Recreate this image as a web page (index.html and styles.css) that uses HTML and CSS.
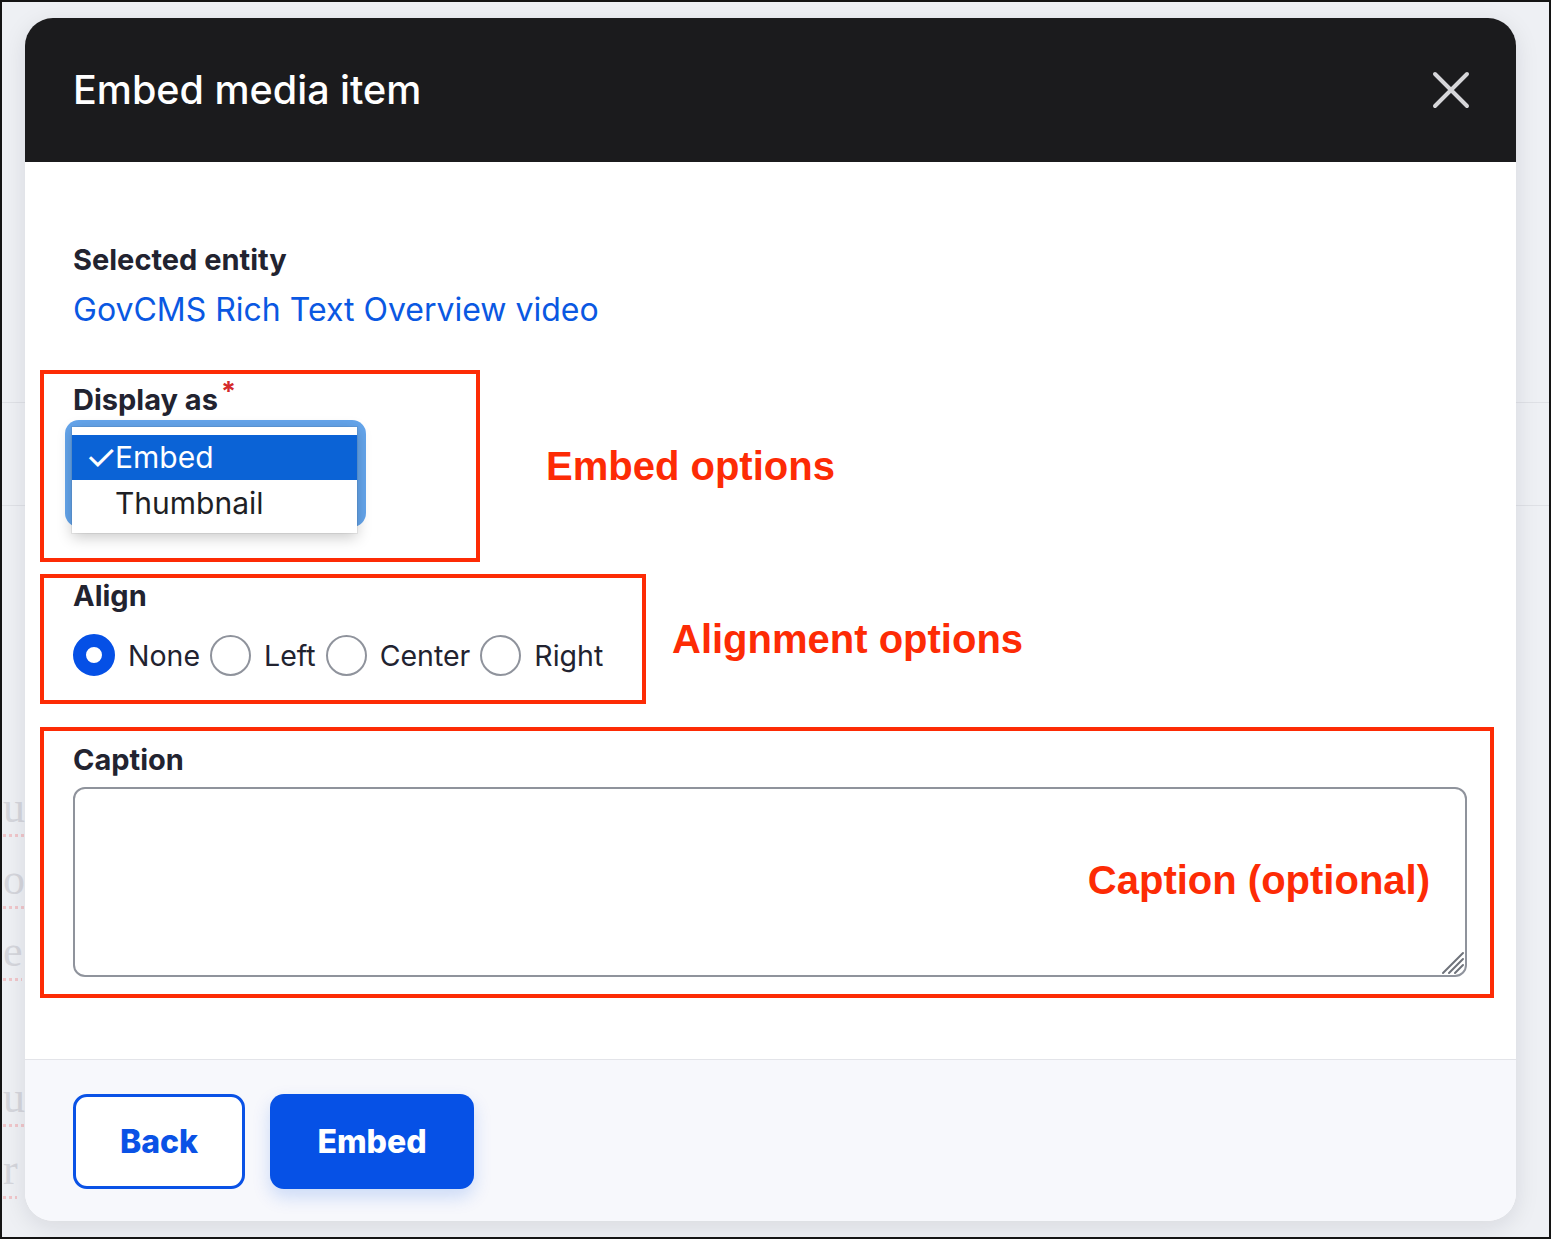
FILE: index.html
```html
<!DOCTYPE html>
<html lang="en">
<head>
<meta charset="utf-8">
<title>Embed media item</title>
<link rel="stylesheet" href="styles.css">
</head>
<body>
<div class="frame">
  <div class="ghost">
    <div class="ghost-rule ghost-rule-1"></div>
    <div class="ghost-rule ghost-rule-2"></div>
    <div class="ghost-text">
      <p class="g1">u</p>
      <p class="g2">o</p>
      <p class="g3">e</p>
      <p class="g4">u</p>
      <p class="g5">r</p>
    </div>
  </div>

  <div class="dialog" role="dialog">
    <div class="dialog-header">
      <h1 class="dialog-title">Embed media item</h1>
      <button class="close" aria-label="Close">
        <svg width="38" height="38" viewBox="0 0 38 38"><path d="M3 3 L35 35 M35 3 L3 35" stroke="#d6d6d9" stroke-width="4" stroke-linecap="round" fill="none"/></svg>
      </button>
    </div>

    <div class="dialog-body">
      <div class="field">
        <div class="label">Selected entity</div>
        <a class="entity-link" href="#">GovCMS Rich Text Overview video</a>
      </div>

      <div class="annot-row row-display">
        <div class="annot box-display">
          <div class="label">Display as<span class="req">*</span></div>
          <div class="select">
            <div class="menu">
              <div class="menu-top"></div>
              <div class="menu-item selected"><span class="check">✓</span>Embed</div>
              <div class="menu-item">Thumbnail</div>
            </div>
          </div>
        </div>
        <div class="note note-embed">Embed options</div>
      </div>

      <div class="annot-row row-align">
        <div class="annot box-align">
          <div class="label">Align</div>
          <div class="radios">
            <span class="radio checked"></span><span class="radio-text">None</span>
            <span class="radio"></span><span class="radio-text">Left</span>
            <span class="radio"></span><span class="radio-text">Center</span>
            <span class="radio"></span><span class="radio-text">Right</span>
          </div>
        </div>
        <div class="note note-align">Alignment options</div>
      </div>

      <div class="annot box-caption">
        <div class="label">Caption</div>
        <div class="textarea">
          <div class="note note-caption">Caption (optional)</div>
          <svg class="grip" width="28" height="28" viewBox="0 0 28 28"><path d="M26 6 L6 26 M26 12 L12 26 M26 18 L18 26" stroke="#6f737b" stroke-width="2" stroke-linecap="round" fill="none"/></svg>
        </div>
      </div>
    </div>

    <div class="dialog-footer">
      <button class="btn btn-back">Back</button>
      <button class="btn btn-primary">Embed</button>
    </div>
  </div>
</div>
</body>
</html>
```

FILE: styles.css
```css
html, body {
  margin: 0;
  padding: 0;
}

body {
  font-family: Inter, "Noto Sans", sans-serif;
  color: #222330;
}

.frame {
  position: relative;
  width: 1551px;
  height: 1239px;
  box-sizing: border-box;
  border: 2px solid #141414;
  background: #eef0f4;
  overflow: hidden;
}

/* faint page behind the modal */
.ghost {
  padding-top: 400px;
}

.ghost-rule {
  height: 1px;
  background: #dfe1e6;
}

.ghost-rule-2 {
  margin-top: 102px;
}

.ghost-text {
  padding-top: 272px;
  padding-left: 1px;
  font-family: "Liberation Serif", serif;
  font-size: 44px;
  color: #d5d6dc;
}

.ghost-text p {
  margin: 0;
  height: 72px;
  line-height: 60px;
  text-decoration: underline dotted #f0c6ca;
  text-decoration-thickness: 3px;
  text-underline-offset: 12px;
}

.ghost-text .g4 {
  margin-top: 74px;
}

/* dialog */
.dialog {
  position: absolute;
  left: 23px;
  top: 16px;
  width: 1491px;
  background: #ffffff;
  border-radius: 28px;
  box-shadow: 0 6px 24px rgba(20, 24, 40, 0.10);
  overflow: hidden;
}

.dialog-header {
  height: 144px;
  background: #1b1b1d;
  display: flex;
  align-items: center;
  justify-content: space-between;
  padding: 0 46px 0 48px;
}

.dialog-title {
  margin: 0;
  color: #ffffff;
  font-size: 39.5px;
  font-weight: 500;
  letter-spacing: 0;
}

.close {
  border: 0;
  background: none;
  padding: 0;
  width: 38px;
  height: 38px;
  display: flex;
}

.dialog-body {
  padding: 80px 48px 61px;
}

.label {
  font-size: 29px;
  font-weight: 700;
  line-height: 36px;
  color: #222330;
}

.entity-link {
  display: block;
  margin-top: 12px;
  font-size: 32px;
  line-height: 40px;
  color: #0a58e2;
  text-decoration: none;
}

.annot-row {
  display: flex;
  align-items: center;
  margin-left: -33px;
}

.annot {
  box-sizing: border-box;
  border: 4px solid #fd2b05;
}

.row-display {
  margin-top: 40px;
  gap: 66px;
}

.box-display {
  width: 440px;
  height: 192px;
  padding: 8px 0 0 29px;
}

.req {
  position: relative;
  top: -9px;
  line-height: 0;
  color: #d42a2a;
  font-size: 27px;
  margin-left: 3px;
}

.select {
  position: relative;
  margin-top: 2px;
  margin-left: -8px;
  width: 301px;
  height: 107px;
  border-radius: 14px;
  background: #64a5ec;
}

.menu {
  position: absolute;
  left: 7px;
  top: 7px;
  width: 285px;
  padding-bottom: 7px;
  background: #ffffff;
  box-shadow: 0 4px 14px rgba(0, 0, 0, 0.22), 0 0 0 1px rgba(0, 0, 0, 0.06);
  font-family: Inter, "Noto Sans", sans-serif;
  font-size: 30px;
}

.menu-top {
  height: 8px;
}

.menu-item {
  height: 46px;
  line-height: 46px;
  padding-left: 43px;
  color: #1e1f25;
  position: relative;
}

.menu-item.selected {
  height: 45px;
  line-height: 45px;
  background: #0b63d6;
  color: #ffffff;
}

.check {
  position: absolute;
  left: 13px;
  top: 0;
  font-size: 36px;
}

.note {
  font-family: "Liberation Sans", Arial, sans-serif;
  font-weight: 700;
  font-size: 40px;
  color: #fd2b05;
  white-space: nowrap;
}

.row-align {
  margin-top: 12px;
  gap: 26px;
}

.box-align {
  width: 606px;
  height: 130px;
  padding: 0 0 0 29px;
}

.radios {
  display: flex;
  align-items: center;
  margin-top: 20px;
  height: 42px;
}

.radio {
  box-sizing: border-box;
  width: 41px;
  height: 41px;
  border-radius: 50%;
  border: 2px solid #8f939c;
  background: #ffffff;
  margin-left: 10px;
  flex: none;
}

.radio.checked {
  width: 42px;
  height: 42px;
  border: 13px solid #0550e6;
  margin-left: 0;
}

.radio-text {
  margin-left: 13px;
  font-size: 28.5px;
  color: #222330;
}

.box-caption {
  margin-top: 23px;
  margin-left: -33px;
  width: 1454px;
  height: 271px;
  padding: 11px 0 0 29px;
}

.textarea {
  position: relative;
  margin-top: 9px;
  box-sizing: border-box;
  width: 1394px;
  height: 190px;
  border: 2px solid #8f939c;
  border-radius: 12px;
  display: flex;
  align-items: center;
  justify-content: flex-end;
  padding-right: 35px;
}

.note-caption {
  margin-top: -4px;
}

.grip {
  position: absolute;
  right: 0;
  bottom: 0;
}

.dialog-footer {
  border-top: 1px solid #e3e4e9;
  background: #f7f8fc;
  padding: 34px 48px 32px;
  display: flex;
  gap: 25px;
}

.btn {
  box-sizing: border-box;
  height: 95px;
  border-radius: 14px;
  font-family: Inter, "Noto Sans", sans-serif;
  font-size: 32px;
  font-weight: 800;
  cursor: pointer;
}

.btn-back {
  width: 172px;
  border: 3px solid #0a52e6;
  background: #ffffff;
  color: #0a52e6;
}

.btn-primary {
  width: 204px;
  border: 0;
  background: #0651e6;
  color: #ffffff;
  box-shadow: 0 8px 18px rgba(6, 81, 230, 0.18);
}
```
